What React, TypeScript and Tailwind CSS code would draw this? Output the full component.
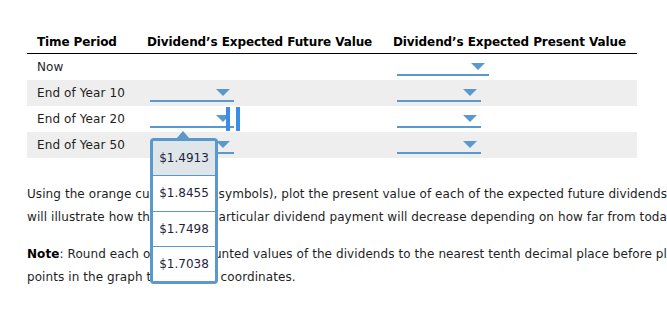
import React from "react";

const BLUE = "#5b98cc";

function Arrow({ className = "" }: { className?: string }) {
  return (
    <svg className={className} width="14" height="7" viewBox="0 0 14 7">
      <polygon points="0,0 14,0 7,7" fill={BLUE} />
    </svg>
  );
}

function Dropdown({ wide = false }: { wide?: boolean }) {
  return (
    <div className={`relative h-[26px] ${wide ? "w-[92px]" : "w-[84px]"}`}>
      <Arrow className={`absolute top-[9px] ${wide ? "left-[74px]" : "left-[66px]"}`} />
      <div className="absolute left-0 right-0 top-[20px] h-[2px] bg-[#5b98cc]" />
    </div>
  );
}

const rows = [
  { label: "Now", future: false, gray: false, wide: true },
  { label: "End of Year 10", future: true, gray: true, wide: false },
  { label: "End of Year 20", future: true, gray: false, wide: false },
  { label: "End of Year 50", future: true, gray: true, wide: false },
];

export default function App() {
  return (
    <div className="relative w-[667px] h-[313px] overflow-hidden bg-white text-[12px] text-[#1e1e1e] font-['DejaVu_Sans','Verdana',sans-serif]">
      <div className="pl-[27px] pt-[31px]">
        <div className="w-[610px]">
          <div className="grid grid-cols-[110px_246px_254px] h-[23px] items-center font-bold text-black tracking-[-0.1px] border-b-[1.5px] border-black">
            <div className="pl-[10px]">Time Period</div>
            <div className="pl-[10px]">Dividend’s Expected Future Value</div>
            <div className="pl-[10px]">Dividend’s Expected Present Value</div>
          </div>
          {rows.map((r) => (
            <div
              key={r.label}
              className={`grid grid-cols-[110px_246px_254px] h-[26px] items-center ${r.gray ? "bg-[#eeeeee]" : "bg-white"}`}
            >
              <div className="pl-[10px] whitespace-nowrap tracking-[0.1px]">{r.label}</div>
              <div className="pl-[13px]">{r.future ? <Dropdown /> : null}</div>
              <div className="pl-[14px]">
                <Dropdown wide={r.wide} />
              </div>
            </div>
          ))}
        </div>
      </div>

      <div className="pl-[27px] pt-[25px] leading-[23px] whitespace-nowrap tracking-[0.08px]">
        <p>Using the orange curve (boxed symbols), plot the present value of each of the expected future dividends. This</p>
        <p>will illustrate how the life of a particular dividend payment will decrease depending on how far from today</p>
        <p className="mt-[14px]">
          <span className="font-bold text-black">Note</span>: Round each of the discounted values of the dividends to the nearest tenth decimal place before plotting</p>
        <p>points in the graph to the most coordinates.</p>
      </div>

      {/* focus cursor bars */}
      <div className="absolute left-[226px] top-[107px] w-[4px] h-[24px] bg-[#3a8ee8]" />
      <div className="absolute left-[236px] top-[107px] w-[4px] h-[24px] bg-[#3a8ee8]" />

      {/* popup menu */}
      <svg className="absolute left-[176px] top-[131px]" width="14" height="8" viewBox="0 0 14 8">
        <polygon points="0,8 7,0 14,8" fill={BLUE} />
      </svg>
      <div className="absolute left-[150px] top-[138px] w-[68px] h-[146px] border-[3px] border-[#5b98cc] rounded-[4px] bg-white overflow-hidden flex flex-col text-[#1f1f3a]">
        {["$1.4913", "$1.8455", "$1.7498", "$1.7038"].map((v, i) => (
          <div
            key={v}
            className={`flex-1 flex items-center justify-center ${i > 0 ? "border-t border-[#5b98cc]" : ""} ${i === 0 ? "bg-[#dfe6ea]" : "bg-white"}`}
          >
            {v}
          </div>
        ))}
      </div>
    </div>
  );
}
